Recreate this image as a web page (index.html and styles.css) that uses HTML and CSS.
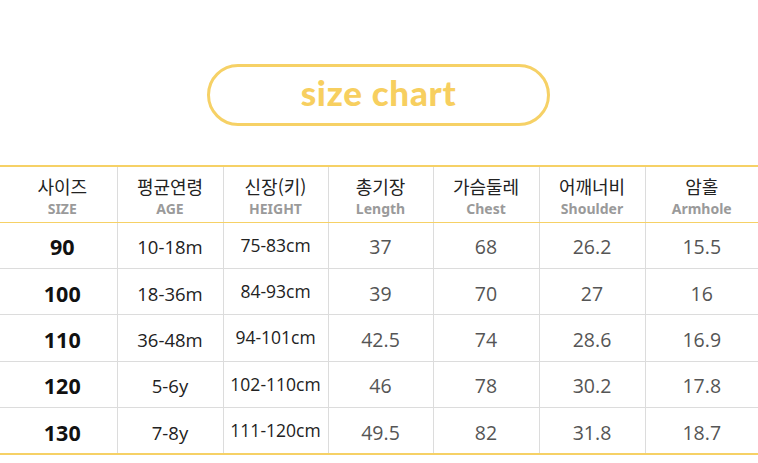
FILE: index.html
```html
<!DOCTYPE html>
<html lang="ko">
<head>
<meta charset="utf-8">
<title>size chart</title>
<link rel="stylesheet" href="styles.css">
</head>
<body>
<div class="page">
  <div class="title-wrap">
    <div class="pill">size chart</div>
  </div>
  <table class="chart">
    <colgroup>
      <col class="c1"><col class="c2"><col class="c3"><col class="c4"><col class="c5"><col class="c6"><col class="c7">
    </colgroup>
    <thead>
      <tr>
        <th class="first"><span class="ko">사이즈</span><span class="en">SIZE</span></th>
        <th><span class="ko">평균연령</span><span class="en">AGE</span></th>
        <th><span class="ko">신장(키)</span><span class="en">HEIGHT</span></th>
        <th><span class="ko">총기장</span><span class="en">Length</span></th>
        <th><span class="ko">가슴둘레</span><span class="en">Chest</span></th>
        <th><span class="ko">어깨너비</span><span class="en">Shoulder</span></th>
        <th><span class="ko">암홀</span><span class="en">Armhole</span></th>
      </tr>
    </thead>
    <tbody>
      <tr><td class="size">90</td><td class="dark">10-18m</td><td class="dark h">75-83cm</td><td>37</td><td>68</td><td>26.2</td><td>15.5</td></tr>
      <tr><td class="size">100</td><td class="dark">18-36m</td><td class="dark h">84-93cm</td><td>39</td><td>70</td><td>27</td><td>16</td></tr>
      <tr><td class="size">110</td><td class="dark">36-48m</td><td class="dark h">94-101cm</td><td>42.5</td><td>74</td><td>28.6</td><td>16.9</td></tr>
      <tr><td class="size">120</td><td class="dark">5-6y</td><td class="dark h">102-110cm</td><td>46</td><td>78</td><td>30.2</td><td>17.8</td></tr>
      <tr><td class="size">130</td><td class="dark">7-8y</td><td class="dark h">111-120cm</td><td>49.5</td><td>82</td><td>31.8</td><td>18.7</td></tr>
    </tbody>
  </table>
</div>
</body>
</html>
```

FILE: styles.css
```css
* { box-sizing: border-box; }
html, body { margin: 0; padding: 0; background: #fff; }
.page {
  width: 758px;
  height: 463px;
  overflow: hidden;
  font-family: "Open Sans", "Noto Sans CJK KR", sans-serif;
}
.title-wrap {
  display: flex;
  justify-content: center;
  padding-top: 64px;
  padding-right: 1px;
}
.pill {
  width: 343px;
  height: 62px;
  border: 3px solid #f6d166;
  border-radius: 31px;
  display: flex;
  align-items: center;
  justify-content: center;
  font-family: "Lato", sans-serif;
  font-weight: 900;
  font-size: 35px;
  color: #f7cf5f;
  letter-spacing: 0.7px;
  padding-bottom: 6px;
}
.chart {
  margin-top: 39px;
  width: 758px;
  border-collapse: collapse;
  table-layout: fixed;
  border-top: 2px solid #f6d166;
  border-bottom: 2px solid #f6d166;
}
.c1 { width: 117px; }
.c2 { width: 106px; }
.c3 { width: 105px; }
.c4 { width: 105px; }
.c5 { width: 106px; }
.c6 { width: 106px; }
.c7 { width: 113px; }
.chart th, .chart td {
  border-left: 1px solid #dcdcdc;
  text-align: center;
  padding: 0;
}
.chart th:first-child, .chart td:first-child { border-left: none; padding-left: 8px; }
.chart thead tr { height: 56px; }
.chart thead th {
  border-bottom: 1px solid #f6d166;
  vertical-align: top;
  padding-top: 7px;
  font-weight: normal;
}
.ko {
  display: block;
  font-family: "Noto Sans CJK KR", sans-serif;
  font-size: 18px;
  line-height: 24px;
  color: #222;
}
.en {
  display: block;
  font-family: "Noto Sans", sans-serif;
  font-weight: 700;
  font-size: 14px;
  line-height: 18px;
  color: #9a9a9a;
  margin-top: 2px;
}
.chart tbody tr { height: 46.4px; }
.chart tbody td {
  border-top: 1px solid #dcdcdc;
  font-size: 19.5px;
  color: #555;
  padding-top: 3px;
}
.chart tbody tr:first-child td { border-top: none; }
.chart td.size {
  font-weight: 700;
  color: #111;
  font-size: 21.5px;
}
.chart td.dark { color: #222; font-size: 18.5px; }
.chart td.h { padding-top: 0; padding-bottom: 1px; font-size: 17.5px; }
```
